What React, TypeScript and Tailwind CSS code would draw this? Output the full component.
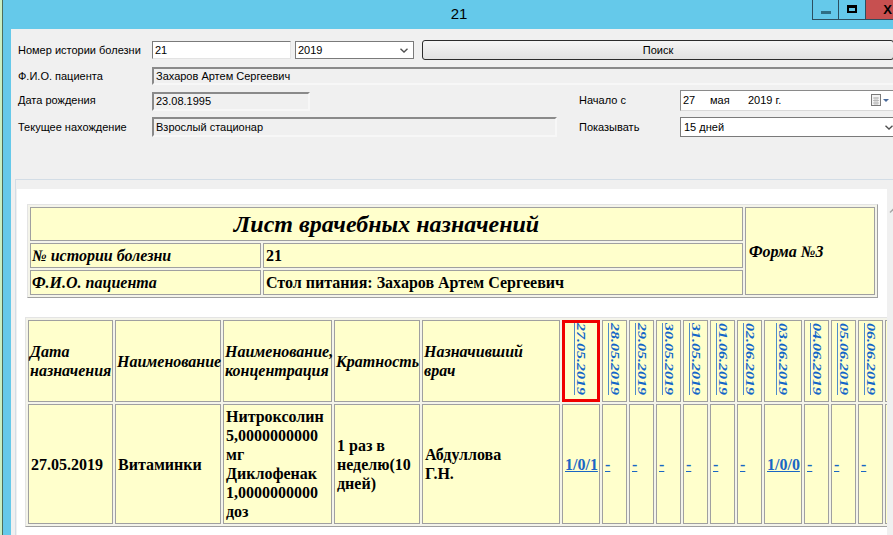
import React from "react";

const dates = [
  "27.05.2019",
  "28.05.2019",
  "29.05.2019",
  "30.05.2019",
  "31.05.2019",
  "01.06.2019",
  "02.06.2019",
  "03.06.2019",
  "04.06.2019",
  "05.06.2019",
  "06.06.2019",
];

const marks: Record<string, string> = {
  "27.05.2019": "1/0/1",
  "03.06.2019": "1/0/0",
};

const sunken =
  "shrink-0 border-2 border-t-[#8a8a8a] border-l-[#8a8a8a] border-r-[#f7f7f7] border-b-[#f7f7f7] pl-[2px] flex items-center";
const cell = "border border-[#a0a0a0] bg-[#ffffcc] p-px align-middle text-left";
const outer =
  "table-fixed border-separate border-spacing-[2px] bg-[#f4f4ea] border border-t-[#e4e4e4] border-l-[#e4e4e4] border-r-[#a0a0a0] border-b-[#a0a0a0]";
const link = "text-[#1a66c4] font-bold underline";

function Chevron() {
  return (
    <svg width="8" height="5" viewBox="0 0 8 5">
      <path d="M0.5 0.8 L4 4 L7.5 0.8" fill="none" stroke="#505050" strokeWidth="1.4" />
    </svg>
  );
}

export default function App() {
  return (
    <div className="flex w-[893px] h-[535px] overflow-hidden bg-[#65c9ea] font-['Liberation_Sans',Arial,sans-serif] text-[11px] text-black">
      <div className="w-[2px] shrink-0 bg-[#c9efc4]" />
      <div className="w-px shrink-0 bg-[#4f6f5a]" />

      <div className="flex flex-col flex-1 min-w-0">
        {/* title bar */}
        <div className="flex h-[29px] shrink-0">
          <div className="flex-1 pl-[103px] pt-[5px] text-center text-[15px] leading-[18px]">21</div>
          <div className="flex w-[81px] h-[20px] shrink-0 border-l border-b border-[#2c4f60]">
            <div className="w-[26px] border-r border-[#2c4f60] flex items-center justify-center">
              <div className="w-[10px] h-[3px] bg-[#2f6e84] mt-[5px]" />
            </div>
            <div className="w-[27px] border-r border-[#2c4f60] flex items-center justify-center">
              <div className="w-[10px] h-[8px] border-2 border-t-[3px] border-black -mt-[1px]" />
            </div>
            <div className="flex-1 bg-[#c75050] flex items-center justify-end pr-[1px] text-[13px] font-bold leading-none">
              X
            </div>
          </div>
        </div>

        {/* client */}
        <div className="ml-[8px] flex-1 min-h-0 bg-[#f0f0f0] flex flex-col overflow-hidden">
          <div className="pl-[7px] pt-[11px] flex flex-col">
            <div className="flex items-center h-[20px]">
              <span className="w-[134px] shrink-0">Номер истории болезни</span>
              <div className="w-[139px] h-[18px] shrink-0 bg-white border border-t-[#7a7a7a] border-l-[#7a7a7a] border-r-[#e3e3e3] border-b-[#e3e3e3] pl-[2px] flex items-center">
                21
              </div>
              <div className="ml-[4px] w-[119px] h-[18px] shrink-0 bg-white border border-[#7a7a7a] flex items-center justify-between pl-[2px] pr-[5px]">
                2019
                <Chevron />
              </div>
              <div className="ml-[8px] w-[472px] h-[20px] shrink-0 rounded-[3px] border border-[#2b2b2b] bg-linear-to-b from-[#f5f5f5] to-[#e1e1e1] flex items-center justify-center">
                Поиск
              </div>
            </div>

            <div className="flex items-center h-[18px] mt-[7px]">
              <span className="w-[134px] shrink-0">Ф.И.О. пациента</span>
              <div className={`${sunken} w-[760px] h-[18px]`}>Захаров Артем Сергеевич</div>
            </div>

            <div className="flex items-end h-[21px] mt-[5px]">
              <span className="w-[134px] shrink-0 self-center">Дата рождения</span>
              <div className={`${sunken} w-[158px] h-[19px]`}>23.08.1995</div>
              <span className="ml-[269px] w-[101px] shrink-0 self-center">Начало с</span>
              <div className="w-[220px] h-[21px] shrink-0 bg-white border border-t-[#8a8a8a] border-l-[#8a8a8a] border-r-[#d9d9d9] border-b-[#d9d9d9] flex items-center pl-[2px] pr-[8px]">
                <span className="w-[27px]">27</span>
                <span className="w-[38px]">мая</span>
                <span>2019 г.</span>
                <div className="flex-1" />
                <svg width="20" height="13" viewBox="0 0 20 13">
                  <rect x="0.5" y="0.5" width="9" height="11" fill="#f4f4f4" stroke="#7a7a7a" />
                  <path d="M2 4h6M2 6.5h6M2 9h6M4 3v8M6 3v8" stroke="#b0b0b0" strokeWidth="0.8" />
                  <path d="M12 5 L18 5 L15 8 Z" fill="#4a6a9a" />
                </svg>
              </div>
            </div>

            <div className="flex items-center h-[20px] mt-[6px]">
              <span className="w-[134px] shrink-0">Текущее нахождение</span>
              <div className={`${sunken} w-[405px] h-[20px]`}>Взрослый стационар</div>
              <span className="ml-[22px] w-[101px] shrink-0">Показывать</span>
              <div className="w-[220px] h-[20px] shrink-0 bg-white border border-[#7a7a7a] flex items-center justify-between pl-[3px] pr-[6px]">
                15 дней
                <Chevron />
              </div>
            </div>
          </div>

          {/* browser panel */}
          <div className="mt-[42px] ml-[4px] flex-1 min-h-0 flex border-t border-l border-[#d3dde6] pt-[9px] pl-px">
            <div className="w-[870px] shrink-0 bg-white overflow-hidden pt-[15px] font-['Liberation_Serif','Times_New_Roman',serif] text-[16px] leading-[19px]">
              <table className={`${outer} ml-[10px] w-[851px]`}>
                <colgroup>
                  <col className="w-[231px]" />
                  <col className="w-[480px]" />
                  <col className="w-[130px]" />
                </colgroup>
                <tbody>
                  <tr>
                    <td colSpan={2} className={`${cell} h-[34px] text-center! text-[24px] font-bold italic`}>
                      Лист врачебных назначений
                    </td>
                    <td rowSpan={3} className={`${cell} font-bold italic pl-[3px]`}>
                      Форма №3
                    </td>
                  </tr>
                  <tr>
                    <td className={`${cell} h-[25px] font-bold italic`}>№ истории болезни</td>
                    <td className={`${cell} font-bold pl-[2px]`}>21</td>
                  </tr>
                  <tr>
                    <td className={`${cell} h-[25px] font-bold italic`}>Ф.И.О. пациента</td>
                    <td className={`${cell} font-bold pl-[2px]`}>Стол питания: Захаров Артем Сергеевич</td>
                  </tr>
                </tbody>
              </table>

              <table className={`${outer} mt-[19px] ml-[8px] w-[888px]`}>
                <colgroup>
                  <col className="w-[85px]" />
                  <col className="w-[106px]" />
                  <col className="w-[109px]" />
                  <col className="w-[86px]" />
                  <col className="w-[138px]" />
                  {dates.map((d) => (
                    <col key={d} className={marks[d] ? "w-[38px]" : "w-[25px]"} />
                  ))}
                  <col className="w-[25px]" />
                </colgroup>
                <tbody>
                  <tr className="font-bold italic">
                    <td className={`${cell} h-[82px]`}>
                      Дата
                      <br />
                      назначения
                    </td>
                    <td className={cell}>Наименование</td>
                    <td className={cell}>
                      Наименование,
                      <br />
                      концентрация
                    </td>
                    <td className={cell}>Кратность</td>
                    <td className={cell}>
                      Назначивший
                      <br />
                      врач
                    </td>
                    {dates.map((d, i) => (
                      <td
                        key={d}
                        className={
                          i === 0
                            ? "border-[3px] border-[#f00000] bg-[#ffffcc] p-0 text-center align-middle"
                            : `${cell} text-center!`
                        }
                      >
                        <span className="inline-block [writing-mode:vertical-rl] text-[16px] leading-[18px] scale-x-75 italic font-bold underline [text-underline-position:left] text-[#1366c8]">
                          {d}
                        </span>
                      </td>
                    ))}
                    <td className={cell} />
                  </tr>
                  <tr className="font-bold">
                    <td className={`${cell} h-[120px] pl-[2px]`}>27.05.2019</td>
                    <td className={`${cell} pl-[2px]`}>Витаминки</td>
                    <td className={`${cell} pl-[2px]`}>
                      Нитроксолин
                      <br />
                      5,0000000000
                      <br />
                      мг
                      <br />
                      Диклофенак
                      <br />
                      1,0000000000
                      <br />
                      доз
                    </td>
                    <td className={`${cell} pl-[2px]`}>
                      1 раз в
                      <br />
                      неделю(10
                      <br />
                      дней)
                    </td>
                    <td className={`${cell} pl-[2px]`}>
                      Абдуллова
                      <br />
                      Г.Н.
                    </td>
                    {dates.map((d) => (
                      <td key={d} className={`${cell} pl-[2px]`}>
                        <span className={link}>{marks[d] ?? "-"}</span>
                      </td>
                    ))}
                    <td className={cell} />
                  </tr>
                </tbody>
              </table>
            </div>
            <div className="flex-1 bg-[#f0f0f0]">
              <svg width="6" height="10" className="mt-[16px] ml-[2px]" viewBox="0 0 6 10">
                <path d="M0.5 7 L5 2.5 L6 3.5 L1.5 8 Z" fill="#a6a6a6" />
              </svg>
            </div>
          </div>
        </div>
      </div>
    </div>
  );
}
